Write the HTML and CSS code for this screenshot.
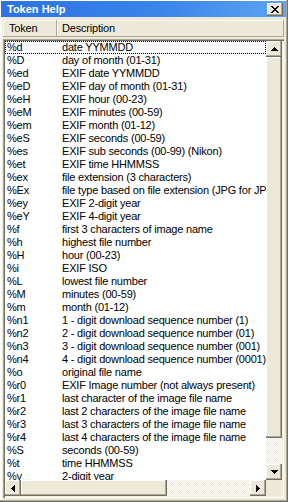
FILE: index.html
```html
<!DOCTYPE html>
<html lang="en">
<head>
  <meta charset="UTF-8">
  <title>Token Help</title>
  <link rel="stylesheet" href="styles.css">
</head>
<body>
  <div class="window">
    <div class="titlebar">
      <span class="title">Token Help</span>
      <div class="close raised">
        <svg width="8" height="7" viewBox="0 0 8 7"><path d="M0 0h2v1h-2zM6 0h2v1h-2zM1 1h2v1h-2zM5 1h2v1h-2zM2 2h4v1h-4zM3 3h2v1h-2zM2 4h4v1h-4zM1 5h2v1h-2zM5 5h2v1h-2zM0 6h2v1h-2zM6 6h2v1h-2z" fill="#000"/></svg>
      </div>
    </div>

    <div class="header">
      <div class="col col-token">Token</div>
      <div class="col col-desc">Description</div>
    </div>

    <div class="list">
      <div class="rows">
        <div class="row focused"><span>%d</span><span>date YYMMDD</span></div>
        <div class="row"><span>%D</span><span>day of month (01-31)</span></div>
        <div class="row"><span>%ed</span><span>EXIF date YYMMDD</span></div>
        <div class="row"><span>%eD</span><span>EXIF day of month (01-31)</span></div>
        <div class="row"><span>%eH</span><span>EXIF hour (00-23)</span></div>
        <div class="row"><span>%eM</span><span>EXIF minutes (00-59)</span></div>
        <div class="row"><span>%em</span><span>EXIF month (01-12)</span></div>
        <div class="row"><span>%eS</span><span>EXIF seconds (00-59)</span></div>
        <div class="row"><span>%es</span><span>EXIF sub seconds (00-99) (Nikon)</span></div>
        <div class="row"><span>%et</span><span>EXIF time HHMMSS</span></div>
        <div class="row"><span>%ex</span><span>file extension (3 characters)</span></div>
        <div class="row"><span>%Ex</span><span>file type based on file extension (JPG for JPEG)</span></div>
        <div class="row"><span>%ey</span><span>EXIF 2-digit year</span></div>
        <div class="row"><span>%eY</span><span>EXIF 4-digit year</span></div>
        <div class="row"><span>%f</span><span>first 3 characters of image name</span></div>
        <div class="row"><span>%h</span><span>highest file number</span></div>
        <div class="row"><span>%H</span><span>hour (00-23)</span></div>
        <div class="row"><span>%i</span><span>EXIF ISO</span></div>
        <div class="row"><span>%L</span><span>lowest file number</span></div>
        <div class="row"><span>%M</span><span>minutes (00-59)</span></div>
        <div class="row"><span>%m</span><span>month (01-12)</span></div>
        <div class="row"><span>%n1</span><span>1 - digit download sequence number (1)</span></div>
        <div class="row"><span>%n2</span><span>2 - digit download sequence number (01)</span></div>
        <div class="row"><span>%n3</span><span>3 - digit download sequence number (001)</span></div>
        <div class="row"><span>%n4</span><span>4 - digit download sequence number (0001)</span></div>
        <div class="row"><span>%o</span><span>original file name</span></div>
        <div class="row"><span>%r0</span><span>EXIF Image number (not always present)</span></div>
        <div class="row"><span>%r1</span><span>last character of the image file name</span></div>
        <div class="row"><span>%r2</span><span>last 2 characters of the image file name</span></div>
        <div class="row"><span>%r3</span><span>last 3 characters of the image file name</span></div>
        <div class="row"><span>%r4</span><span>last 4 characters of the image file name</span></div>
        <div class="row"><span>%S</span><span>seconds (00-59)</span></div>
        <div class="row"><span>%t</span><span>time HHMMSS</span></div>
        <div class="row"><span>%y</span><span>2-digit year</span></div>
      </div>

      <!-- vertical scrollbar -->
      <div class="vscroll">
        <div class="btn raised">
          <svg width="7" height="4" viewBox="0 0 7 4"><path d="M3 0h1v1h-1zM2 1h3v1h-3zM1 2h5v1h-5zM0 3h7v1h-7z" fill="#000"/></svg>
        </div>
        <div class="vthumb raised"></div>
        <div class="track"></div>
        <div class="btn raised">
          <svg width="7" height="4" viewBox="0 0 7 4"><path d="M0 0h7v1h-7zM1 1h5v1h-5zM2 2h3v1h-3zM3 3h1v1h-1z" fill="#000"/></svg>
        </div>
      </div>

      <!-- horizontal scrollbar -->
      <div class="hscroll">
        <div class="btn raised">
          <svg width="4" height="7" viewBox="0 0 4 7"><path d="M3 0h1v7h-1zM2 1h1v5h-1zM1 2h1v3h-1zM0 3h1v1h-1z" fill="#000"/></svg>
        </div>
        <div class="hthumb raised"></div>
        <div class="track"></div>
        <div class="btn raised">
          <svg width="4" height="7" viewBox="0 0 4 7"><path d="M0 0h1v7h-1zM1 1h1v5h-1zM2 2h1v3h-1zM3 3h1v1h-1z" fill="#000"/></svg>
        </div>
      </div>

      <div class="corner"></div>
    </div>
  </div>
</body>
</html>
```

FILE: styles.css
```css
/* Classic Windows dialog */
body {
  margin: 0;
  background: #ECE9D8;
  font-family: 'Liberation Sans', Arial, sans-serif;
  font-size: 11px;
  letter-spacing: -0.2px;
  color: #000;
}

.window {
  box-sizing: border-box;
  width: 288px;
  height: 502px;
  padding: 1px 4px 4px 3px;
  display: flex;
  flex-direction: column;
  background: #ECE9D8;
  box-shadow: inset -1px -1px #716F64, inset -2px -2px #ACA899, inset 2px 2px #fff;
}

/* Title bar */
.titlebar {
  height: 16px;
  margin: 0 -2px 3px -2px;
  padding: 0 3px 0 6px;
  display: flex;
  align-items: center;
  justify-content: space-between;
  background: linear-gradient(to right, #2d72e4 0%, #3a84ea 55%, #5ea4f2 100%);
}

.title {
  color: #fff;
  font-weight: bold;
  letter-spacing: 0;
  line-height: 16px;
}

.raised {
  background: #ECE9D8;
  box-shadow: inset -1px -1px #716F64, inset -2px -2px #ACA899, inset 1px 1px #fff;
}

.close {
  width: 16px;
  height: 13px;
  margin-top: 1px;
  display: flex;
  align-items: center;
  justify-content: center;
}

/* Column header */
.header {
  height: 17px;
  display: flex;
  margin-bottom: 2px;
}

.col {
  box-sizing: border-box;
  line-height: 16px;
  box-shadow: inset -1px -1px #ACA899, inset 1px 1px #fff;
}

.col-token {
  width: 54px;
  padding-left: 6px;
}

.col-desc {
  flex: 1;
  padding-left: 5px;
}

/* List box */
.list {
  flex: 1;
  padding: 2px;
  display: grid;
  grid-template-columns: 1fr 16px;
  grid-template-rows: 1fr 16px;
  min-height: 0;
  box-shadow: inset 1px 1px #ACA899, inset 2px 2px #716F64, inset -1px -1px #fff, inset -2px -2px #F1EFE2;
}

.rows {
  background: #fff;
  overflow: hidden;
  min-height: 0;
}

.row {
  display: grid;
  grid-template-columns: 53px 1fr;
  height: 13px;
  line-height: 13px;
  white-space: nowrap;
}

.row span:first-child {
  padding-left: 2px;
}

.row span:last-child {
  padding-left: 4px;
  overflow: hidden;
}

.row.focused {
  outline: 1px dotted #000;
  outline-offset: -1px;
}

/* Scrollbars */
.vscroll {
  display: flex;
  flex-direction: column;
}

.hscroll {
  display: flex;
}

.btn {
  width: 16px;
  height: 16px;
  flex: none;
  display: flex;
  align-items: center;
  justify-content: center;
}

.vthumb {
  height: 381px;
  flex: none;
}

.hthumb {
  width: 146px;
  flex: none;
}

.track {
  flex: 1;
  background: repeating-conic-gradient(#fff 0 25%, #ECE9D8 0 50%) 0 0 / 2px 2px;
}

.corner {
  background: #ECE9D8;
}
```
